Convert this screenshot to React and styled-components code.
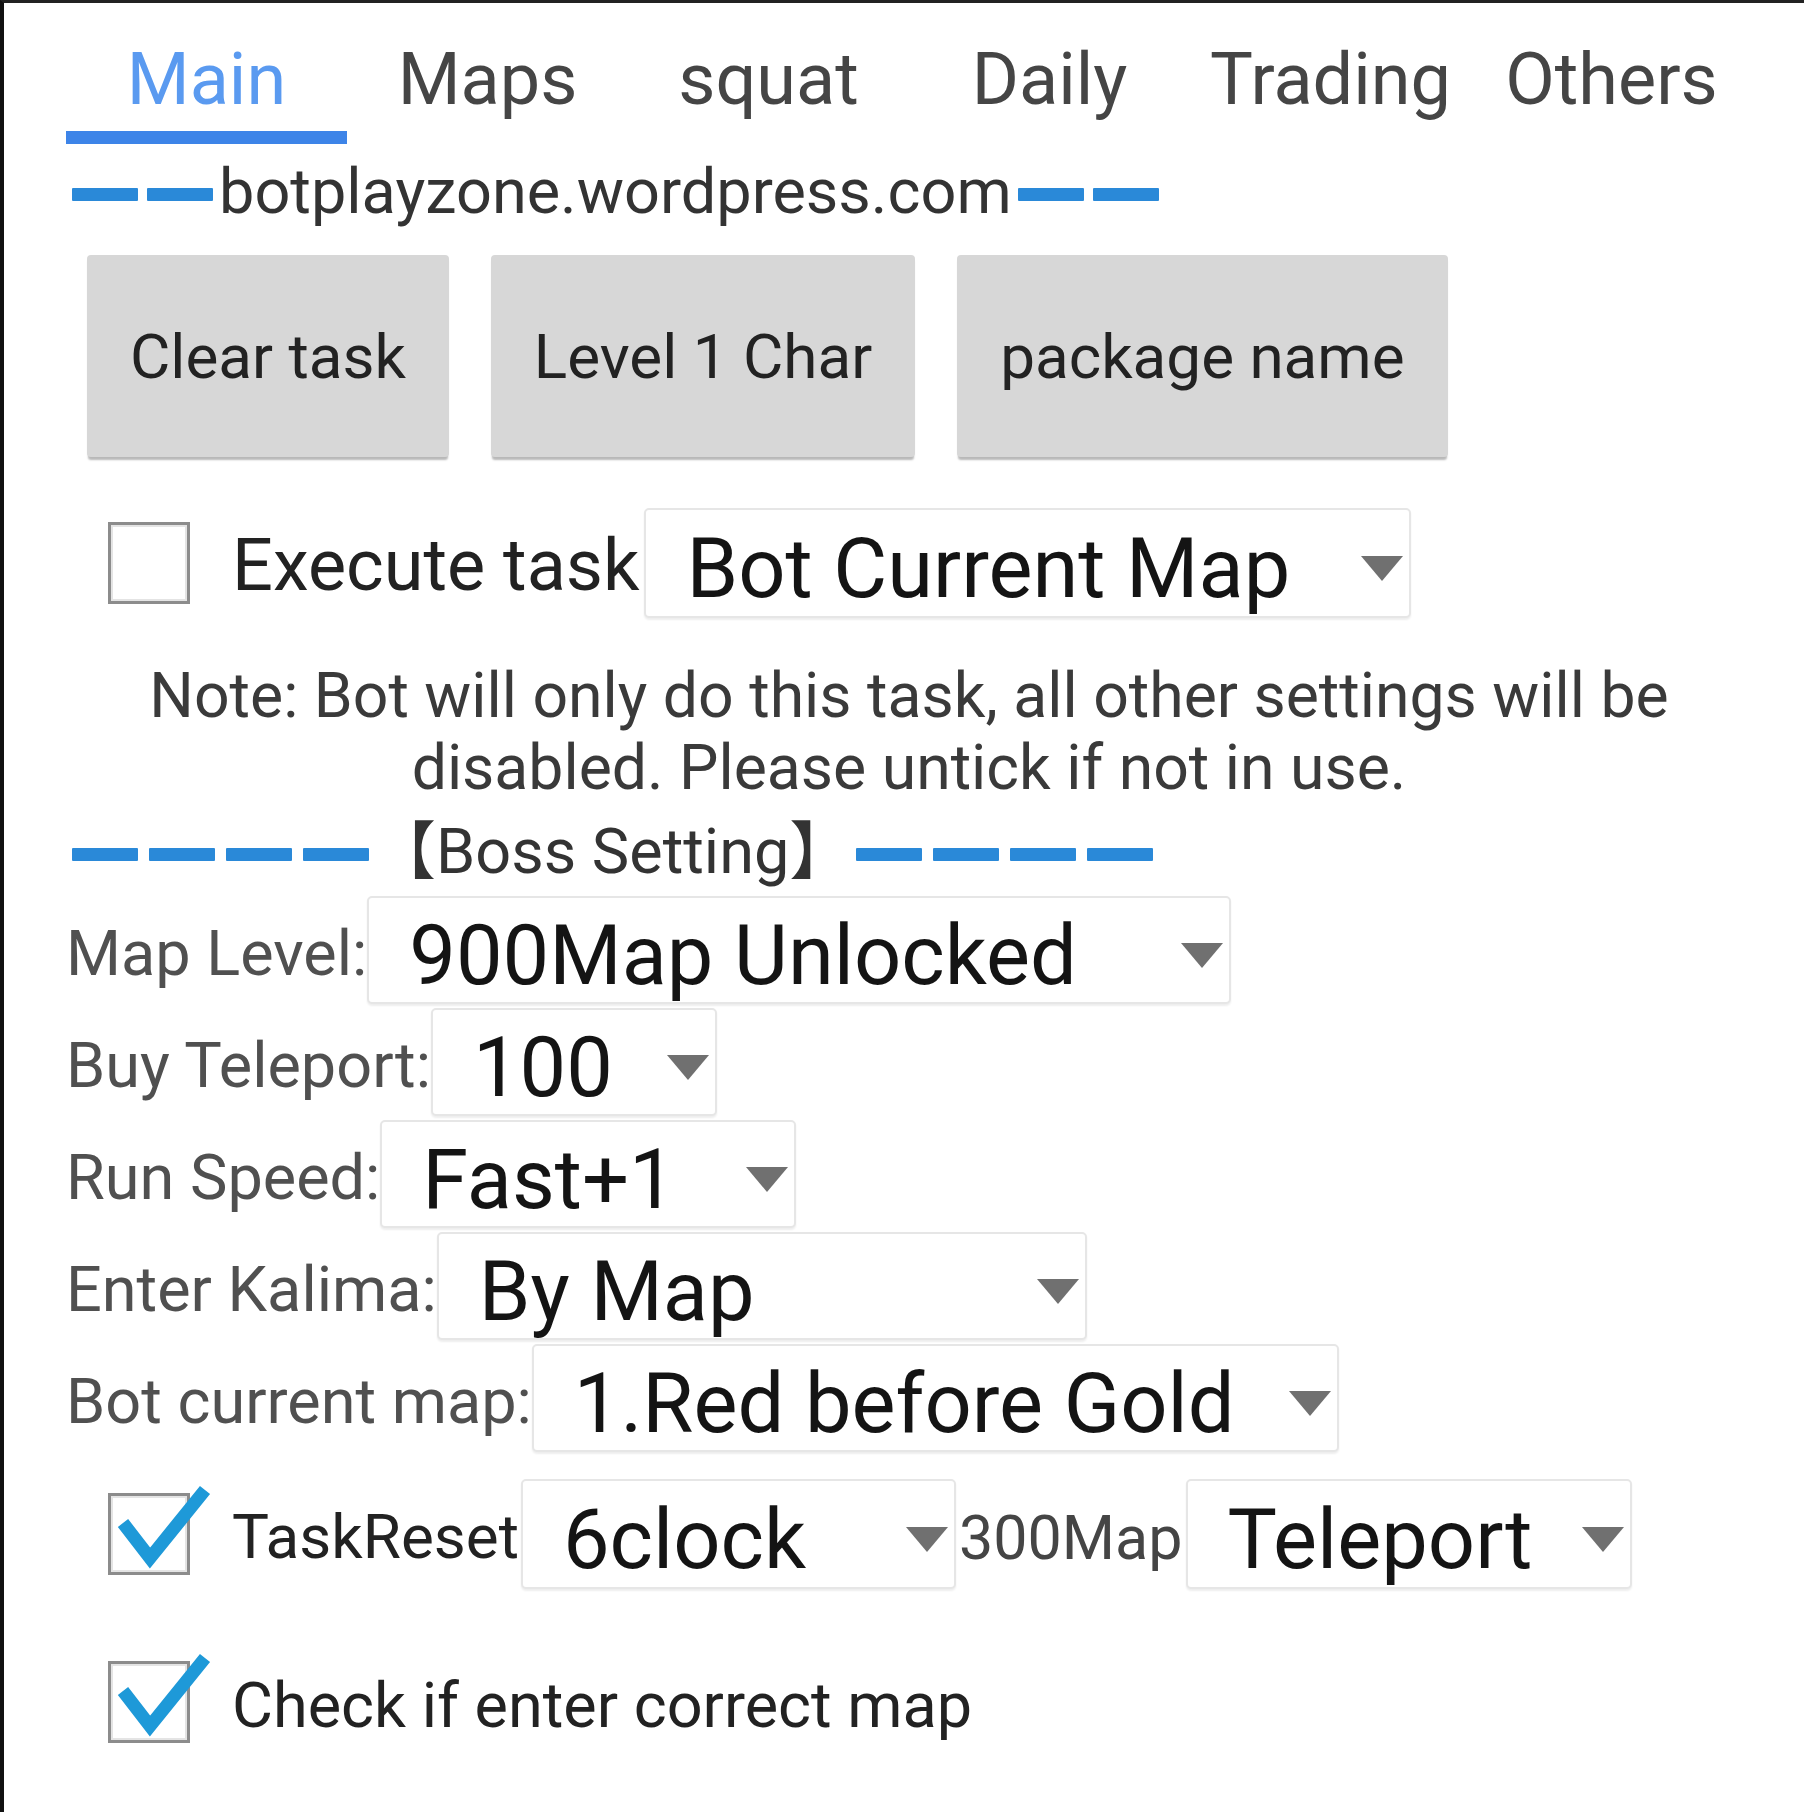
import React from 'react';
import styled, { createGlobalStyle } from 'styled-components';

const GlobalStyle = createGlobalStyle`
  html, body { margin: 0; padding: 0; background: #fff; }
  body { font-family: Roboto, "Noto Sans", "Noto Sans CJK SC", sans-serif; }
`;

const Frame = styled.div`
  box-sizing: border-box;
  width: 1804px;
  min-height: 100vh;
  border-top: 3px solid #222;
  border-left: 4px solid #111;
  padding: 0 52px 0 62px;
  background: #fff;
  display: flex;
  flex-direction: column;
  font-family: Roboto, "Noto Sans CJK SC", sans-serif;
`;

const TabBar = styled.div`
  display: grid;
  grid-template-columns: repeat(6, 1fr);
  margin-top: 41px;
`;

const Tab = styled.div`
  display: flex;
  flex-direction: column;
  align-items: center;
  font-size: 72px;
  line-height: 72px;
  color: ${(p) => (p.$active ? '#5a9af0' : '#454545')};
  &::after {
    content: '';
    align-self: stretch;
    height: 13px;
    margin-top: 15px;
    background: ${(p) => (p.$active ? '#3d84e8' : 'transparent')};
  }
`;

const Divider = styled.div`
  display: flex;
  align-items: center;
  margin-top: ${(p) => p.$mt}px;
  padding-left: 6px;
  gap: ${(p) => p.$gap}px;
`;

const DashGroup = styled.div`
  display: flex;
  gap: ${(p) => p.$gap}px;
  margin-top: 4px;
`;

const Dash = styled.span`
  width: 66px;
  height: 13px;
  background: #2a89d8;
  border-radius: 1px;
`;

const DividerText = styled.span`
  font-size: 63px;
  line-height: 62px;
  color: #333;
  white-space: nowrap;
`;

const ButtonRow = styled.div`
  display: flex;
  gap: 42px;
  margin-top: 32px;
  padding-left: 21px;
`;

const Button = styled.button`
  height: 202px;
  padding: 0 43px;
  border: none;
  border-radius: 4px;
  background: #d7d7d7;
  box-shadow: 0 4px 2px -1px rgba(0, 0, 0, 0.28);
  font-family: Roboto, sans-serif;
  font-size: 62px;
  color: #222;
  white-space: nowrap;
`;

const CheckRow = styled.div`
  display: flex;
  align-items: center;
  height: ${(p) => p.$h}px;
  margin-top: ${(p) => p.$mt}px;
  padding-left: 42px;
`;

const Box = styled.span`
  position: relative;
  box-sizing: border-box;
  width: 82px;
  height: 82px;
  flex-shrink: 0;
  border: 3px solid #8c8c8c;
  box-shadow: inset 0 0 0 2px #e4e4e4;
  margin-right: 42px;
  background: #fff;
`;

const CheckMark = styled.svg`
  position: absolute;
  left: -3px;
  top: -3px;
  overflow: visible;
`;

const CheckText = styled.span`
  font-size: ${(p) => p.$size}px;
  line-height: ${(p) => p.$size}px;
  color: #222;
  white-space: nowrap;
  padding-top: 6px;
  margin-right: ${(p) => p.$mr || 0}px;
`;

const SelectBox = styled.div`
  box-sizing: border-box;
  width: ${(p) => p.$w}px;
  height: ${(p) => p.$h}px;
  flex-shrink: 0;
  display: flex;
  align-items: center;
  padding: 10px 6px 0 40px;
  border: 2px solid #e6e6e6;
  border-radius: 5px;
  box-shadow: 0 2px 2px rgba(0, 0, 0, 0.07);
  background: #fff;
  font-size: 83px;
  line-height: 83px;
  color: #141414;
`;

const SelectValue = styled.span`
  flex: 1;
  white-space: nowrap;
`;

const Caret = styled.span`
  width: 0;
  height: 0;
  border-left: 21px solid transparent;
  border-right: 21px solid transparent;
  border-top: 25px solid #707070;
`;

const Note = styled.p`
  margin: 42px 0 0;
  font-size: 62.5px;
  line-height: 72px;
  color: #3a3a3a;
  text-align: center;
`;

const Form = styled.div`
  display: flex;
  flex-direction: column;
  gap: 4px;
  margin-top: 13px;
`;

const FormRow = styled.div`
  display: flex;
  align-items: center;
`;

const FieldLabel = styled.span`
  font-size: ${(p) => p.$size || 63}px;
  line-height: 62px;
  color: ${(p) => p.$color || '#505050'};
  padding-top: 8px;
  margin: 0 ${(p) => p.$mx || 0}px;
  white-space: nowrap;
`;

const Select = ({ w, h = 108, value }) => (
  <SelectBox $w={w} $h={h}>
    <SelectValue>{value}</SelectValue>
    <Caret />
  </SelectBox>
);

const Checkbox = ({ checked }) => (
  <Box>
    {checked && (
      <CheckMark width="110" height="90" viewBox="0 0 110 90">
        <path
          d="M15 30 L42 65 L97 -3"
          fill="none"
          stroke="#1e99d8"
          strokeWidth="13"
          strokeLinejoin="miter"
        />
      </CheckMark>
    )}
  </Box>
);

const Dashes = ({ n, gap }) => (
  <DashGroup $gap={gap}>
    {Array.from({ length: n }).map((_, i) => (
      <Dash key={i} />
    ))}
  </DashGroup>
);

const tabs = ['Main', 'Maps', 'squat', 'Daily', 'Trading', 'Others'];

const formRows = [
  { label: 'Map Level:', w: 864, value: '900Map Unlocked' },
  { label: 'Buy Teleport:', w: 286, value: '100' },
  { label: 'Run Speed:', w: 416, value: 'Fast+1' },
  { label: 'Enter Kalima:', w: 650, value: 'By Map' },
  { label: 'Bot current map:', w: 807, value: '1.Red before Gold' },
];

export default function App() {
  return (
    <>
      <GlobalStyle />
      <Frame>
        <TabBar>
          {tabs.map((t) => (
            <Tab key={t} $active={t === 'Main'}>
              {t}
            </Tab>
          ))}
        </TabBar>

        <Divider $mt={17} $gap={6}>
          <Dashes n={2} gap={9} />
          <DividerText>botplayzone.wordpress.com</DividerText>
          <Dashes n={2} gap={9} />
        </Divider>

        <ButtonRow>
          <Button>Clear task</Button>
          <Button>Level 1 Char</Button>
          <Button>package name</Button>
        </ButtonRow>

        <CheckRow $h={110} $mt={51}>
          <Checkbox />
          <CheckText $size={72} $mr={5}>Execute task</CheckText>
          <Select w={767} h={110} value="Bot Current Map" />
        </CheckRow>

        <Note>
          Note: Bot will only do this task, all other settings will be disabled. Please untick if not in use.
        </Note>

        <Divider $mt={17} $gap={4}>
          <Dashes n={4} gap={11} />
          <DividerText>【Boss Setting】</DividerText>
          <Dashes n={4} gap={11} />
        </Divider>

        <Form>
          {formRows.map((r) => (
            <FormRow key={r.label}>
              <FieldLabel>{r.label}</FieldLabel>
              <Select w={r.w} value={r.value} />
            </FormRow>
          ))}
        </Form>

        <CheckRow $h={110} $mt={27}>
          <Checkbox checked />
          <CheckText $size={62} $mr={2}>TaskReset</CheckText>
          <Select w={435} h={110} value="6clock" />
          <FieldLabel $size={61} $mx={3} $color="#454545">300Map</FieldLabel>
          <Select w={446} h={110} value="Teleport" />
        </CheckRow>

        <CheckRow $h={82} $mt={72}>
          <Checkbox checked />
          <CheckText $size={63}>Check if enter correct map</CheckText>
        </CheckRow>
      </Frame>
    </>
  );
}
